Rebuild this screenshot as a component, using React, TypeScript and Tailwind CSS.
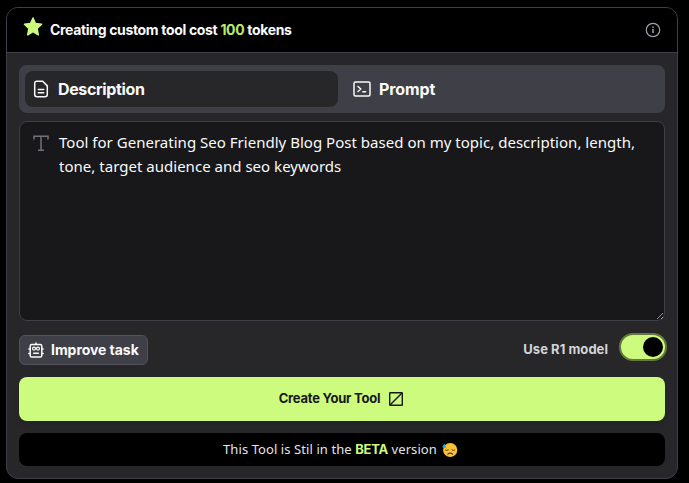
import { useState } from 'react';

type IconProps = { className?: string };

const StarIcon = ({ className }: IconProps) => (
  <svg viewBox="0 0 18 18" fill="currentColor" stroke="currentColor" strokeWidth="1.400" strokeLinejoin="round" className={className}>
    <path d="M9 .9l2.300 5.200 5.800.7-4.200 4 1.100 6.100L9 13.900l-5 3L5.100 10.800l-4.200-4 5.800-.7z" />
  </svg>
);

const InfoIcon = ({ className }: IconProps) => (
  <svg viewBox="0 0 16 16" fill="none" stroke="currentColor" className={className}>
    <circle cx="8" cy="8" r="6.700" strokeWidth="1.200" />
    <path d="M8 7v4" strokeWidth="1.500" />
    <path d="M8 4.600v1.400" strokeWidth="1.500" />
  </svg>
);

const DocumentIcon = ({ className }: IconProps) => (
  <svg viewBox="0 0 16 18" fill="none" stroke="currentColor" strokeWidth="1.500" strokeLinecap="round" strokeLinejoin="round" className={className}>
    <path d="M3.500 1.300h6.200l4.600 4.600v8.600a2.200 2.200 0 0 1-2.200 2.200H3.900a2.200 2.200 0 0 1-2.200-2.200V3.300a2 2 0 0 1 1.800-2z" />
    <path d="M5.300 9.500h5.400M5.300 12.800h5.400" />
  </svg>
);

const TerminalIcon = ({ className }: IconProps) => (
  <svg viewBox="0 0 18 16" fill="none" stroke="currentColor" strokeWidth="1.500" strokeLinecap="round" strokeLinejoin="round" className={className}>
    <rect x="1" y="1" width="16" height="14" rx="1.500" />
    <path d="M5 5.500l2.800 2.500L5 10.500M9.800 10.800h2.800" />
  </svg>
);

const TextIcon = ({ className }: IconProps) => (
  <svg viewBox="0 0 16 16" fill="none" stroke="currentColor" strokeWidth="1.500" className={className}>
    <path d="M1 4.500V1.200h14v3.300M8 1.200v14M5 15.200h6" />
  </svg>
);

const RobotIcon = ({ className }: IconProps) => (
  <svg viewBox="0 0 16 16" fill="none" stroke="currentColor" strokeWidth="1.500" strokeLinecap="round" strokeLinejoin="round" className={className}>
    <rect x="2.200" y="2.600" width="11.600" height="12.400" rx="1.600" />
    <path d="M8 .9v1.500M.9 7h1M14.100 7h1M.9 11.500h1M14.100 11.500h1" />
    <circle cx="6" cy="6.600" r="1.500" strokeWidth="1.200" />
    <circle cx="10" cy="6.600" r="1.500" strokeWidth="1.200" />
    <path d="M5.700 11.200h4.600" />
  </svg>
);

const SlashSquareIcon = ({ className }: IconProps) => (
  <svg viewBox="0 0 14 14" fill="none" stroke="currentColor" strokeWidth="1.400" className={className}>
    <rect x=".7" y=".7" width="12.600" height="12.600" rx=".5" />
    <path d="M1 13L13 1" />
  </svg>
);

const SweatFace = ({ className }: IconProps) => (
  <svg viewBox="0 0 16 16" fill="none" strokeLinecap="round" className={className}>
    <circle cx="8.200" cy="8" r="7.100" fill="#fcc235" />
    <path d="M3.500 8.100q1.400.9 2.900-.2M9.900 7.900q1.500 1.100 2.900.2" stroke="#5b3f1c" strokeWidth="1" />
    <path d="M5.800 12.100q2.400-2 4.800 0" stroke="#4a3420" strokeWidth="1.200" />
    <path d="M2.300 1.700C1.400 3 .4 4 .5 5.100c.3 1.500 3.200 1.500 3.500 0C4.100 4 3.100 3 2.300 1.700z" fill="#28a8e8" />
  </svg>
);

export default function App() {
  const [tab, setTab] = useState<'description' | 'prompt'>('description');
  const [useR1, setUseR1] = useState(true);
  const [task, setTask] = useState(
    'Tool for Generating Seo Friendly Blog Post based on my topic, description, length, tone, target audience and seo keywords'
  );

  return (
    <div className="h-[483px] bg-black pl-1.5 pt-[7px] font-['Inter','Liberation_Sans',sans-serif] text-zinc-50">
      <div className="flex h-[472px] w-[672px] flex-col overflow-hidden rounded-xl border border-zinc-700 bg-zinc-800">
        {/* Header */}
        <header className="flex h-[45px] shrink-0 items-center border-b border-zinc-700 bg-black px-4">
          <StarIcon className="mb-2 h-[19px] w-5 text-[#cdfb7d]" />
          <h1 className="mb-px ml-[7px] whitespace-nowrap text-sm font-bold tracking-[-0.33px]">
            Creating custom tool cost <span className="text-[#b9ec68]">100</span> tokens
          </h1>
          <InfoIcon className="ml-auto h-4 w-4 text-zinc-400" />
        </header>

        <div className="flex flex-col p-3">
          {/* Tabs */}
          <div className="grid h-12 grid-cols-[313px_1fr] rounded-lg bg-zinc-700 p-1.5">
            <button
              onClick={() => setTab('description')}
              className={`flex items-center gap-[9px] rounded-lg pl-2 text-base font-bold tracking-[-0.36px] ${tab === 'description' ? 'bg-zinc-800' : ''}`}
            >
              <DocumentIcon className="h-[18px] w-4" />
              Description
            </button>
            <button
              onClick={() => setTab('prompt')}
              className={`flex items-center gap-2 rounded-lg pl-[15px] text-base font-bold tracking-[-0.1px] ${tab === 'prompt' ? 'bg-zinc-800' : ''}`}
            >
              <TerminalIcon className="h-4 w-[18px]" />
              Prompt
            </button>
          </div>

          {/* Task input */}
          <div className="relative mt-2 h-[200px]">
            <TextIcon className="absolute left-3.5 top-3.5 h-4 w-4 text-zinc-500" />
            <textarea
              value={task}
              onChange={(e) => setTask(e.target.value)}
              spellCheck={false}
              className="block h-[200px] w-full rounded-lg border border-zinc-700 bg-zinc-900 pl-[39px] pr-4 pt-2 font-['Noto_Sans',sans-serif] text-[15px] leading-6 tracking-[0.02px] outline-none"
            />
          </div>

          {/* Options */}
          <div className="mt-3 flex h-8 items-start justify-between">
            <button className="mt-0.5 flex h-[30px] w-[129px] items-center gap-[7px] whitespace-nowrap rounded-md border border-zinc-600 bg-zinc-700 pl-2 text-sm font-bold tracking-[-0.05px]">
              <RobotIcon className="h-4 w-4" />
              Improve task
            </button>
            <div className="flex gap-[11px]">
              <span className="mt-1.5 whitespace-nowrap text-[13px] font-bold leading-5 tracking-[0.05px] text-zinc-300">Use R1 model</span>
              <button
                role="switch"
                aria-checked={useR1}
                onClick={() => setUseR1(!useR1)}
                className={`-mr-0.5 flex h-7 w-12 items-center rounded-full border-2 border-[#66783f] bg-[#cdfb7d] px-0.5 ${useR1 ? 'justify-end' : 'justify-start'}`}
              >
                <span className="h-5 w-5 rounded-full bg-black" />
              </button>
            </div>
          </div>

          <button className="mt-3 flex h-11 items-center justify-center gap-[9px] rounded-lg bg-[#cdfb7d] pr-0.5 text-[13px] font-bold tracking-[-0.22px] text-zinc-900 shadow-md">
            Create Your Tool
            <SlashSquareIcon className="h-3.5 w-3.5" />
          </button>

          {/* Beta notice */}
          <div className="mt-3 flex h-[33px] items-center justify-center rounded-lg bg-black pr-[3px] font-['Noto_Sans',sans-serif] text-[13px] tracking-[0.08px] text-zinc-200">
            <p className="whitespace-nowrap">
              This Tool is Stil in the{' '}
              <span className="font-['Inter',sans-serif] font-bold tracking-[-0.2px] text-[#cdfb7d]">BETA</span> version
            </p>
            <SweatFace className="ml-[5px] h-4 w-4" />
          </div>
        </div>
      </div>
    </div>
  );
}
